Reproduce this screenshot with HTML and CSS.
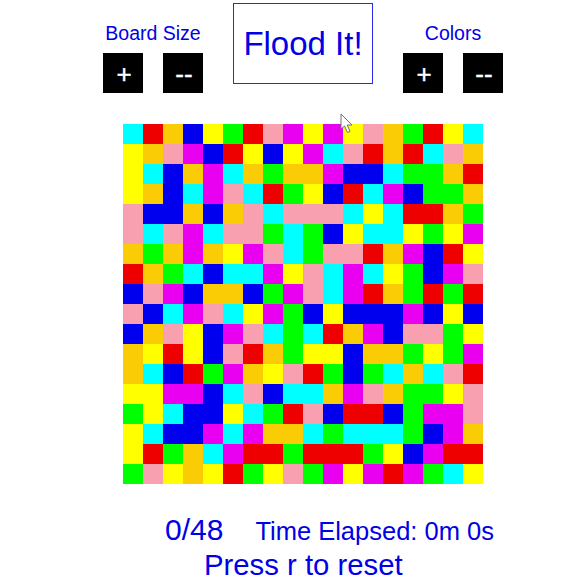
FILE: index.html
```html
<!DOCTYPE html>
<html lang="en">
  <head>
    <meta charset="UTF-8" />
    <title>Flood It!</title>
    <link rel="stylesheet" href="styles.css">
  </head>
  <body>
    <div id="top-bar">
      <div class="control-group">
        <div class="control-label">Board Size</div>
        <div class="control-buttons">
          <button class="control-button">+</button>
          <button class="control-button">--</button>
        </div>
      </div>
      <div id="title">Flood It!</div>
      <div class="control-group">
        <div class="control-label">Colors</div>
        <div class="control-buttons">
          <button class="control-button">+</button>
          <button class="control-button">--</button>
        </div>
      </div>
    </div>

    <div id="board"></div>

    <div id="status">
      <span id="moves">0/48</span>
      <span id="timer">Time Elapsed: 0m 0s</span>
    </div>
    <div id="reset-hint">Press r to reset</div>

    <svg id="cursor" width="14" height="21" viewBox="0 0 14 21">
      <path d="M1 1 L1 16 L4.5 13 L7.5 19.5 L10 18.5 L7.2 12 L12 12 Z" fill="#fff" stroke="#707070" stroke-width="1" />
    </svg>

    <script>
      const rows = [
        "crobygrpmymypogryc",
        "yopmbrybymcprorcpo",
        "ycbomcogoombbcggor",
        "yobcmpcrgybrcmbggo",
        "pbbobopcpppcycrrog",
        "pcpmcppgcgbyccygym",
        "ogomoympcgpprombry",
        "rogcbccmypcmcygbmp",
        "bpmboobgmpcmrogrgr",
        "pbcmpcymgbybbbmbyb",
        "bopybmpcgcrombppgy",
        "oyrybprogyyboogygm",
        "ocbrgmoyprgbgcocpr",
        "yymmbcpbccompoggyp",
        "gycbbycgrpbrrbgmmp",
        "ycbbmcmoocgcccgbmo",
        "yrgocmrrgrrrgybmrr",
        "gpyoyrgypgmymrmgcy",
      ];

      const board = document.getElementById("board");

      rows.forEach((row) => {
        for (const color of row) {
          const cell = document.createElement("div");
          cell.classList.add("cell", color);
          board.appendChild(cell);
        }
      });
    </script>
  </body>
</html>
```

FILE: styles.css
```css
body {
  font-family: "Liberation Sans", Arial, sans-serif;
  background-color: #ffffff;
  color: #0000e6;
  margin: 0;
  padding: 0;
  height: 588px;
  overflow: hidden;
}
#top-bar {
  display: flex;
  align-items: flex-start;
  gap: 30px;
  padding: 3px 0 0 103px;
}
.control-group {
  width: 100px;
  padding-top: 18px;
}
.control-label {
  width: 100px;
  height: 32px;
  line-height: 24px;
  font-size: 19.5px;
  text-align: center;
  white-space: nowrap;
}
.control-buttons {
  display: flex;
  gap: 20px;
}
.control-button {
  width: 40px;
  height: 40px;
  padding: 2px 0 0 2px;
  border: none;
  background-color: #000000;
  color: #ffffff;
  font-family: inherit;
  font-size: 26px;
  -webkit-text-stroke: 0.4px #ffffff;
}
#title {
  width: 138px;
  height: 79px;
  border: 1px solid #2a2aee;
  line-height: 79px;
  text-align: center;
  font-size: 33px;
}
#board {
  display: grid;
  grid-template-columns: repeat(18, 20px);
  grid-auto-rows: 20px;
  width: 360px;
  margin: 31px 0 0 123px;
}
.c { background-color: #00ffff; }
.r { background-color: #ee0000; }
.o { background-color: #f9cc05; }
.b { background-color: #0000ee; }
.y { background-color: #ffff00; }
.g { background-color: #00ff00; }
.p { background-color: #f8a0b0; }
.m { background-color: #e900f0; }
#status {
  display: flex;
  align-items: baseline;
  gap: 32px;
  margin: 30px 0 0 165px;
  line-height: 32px;
}
#moves {
  font-size: 30px;
}
#timer {
  font-size: 25.5px;
}
#reset-hint {
  margin: 1px 0 0 204px;
  line-height: 34px;
  font-size: 29.3px;
}
#cursor {
  position: absolute;
  left: 340px;
  top: 113px;
}
```
